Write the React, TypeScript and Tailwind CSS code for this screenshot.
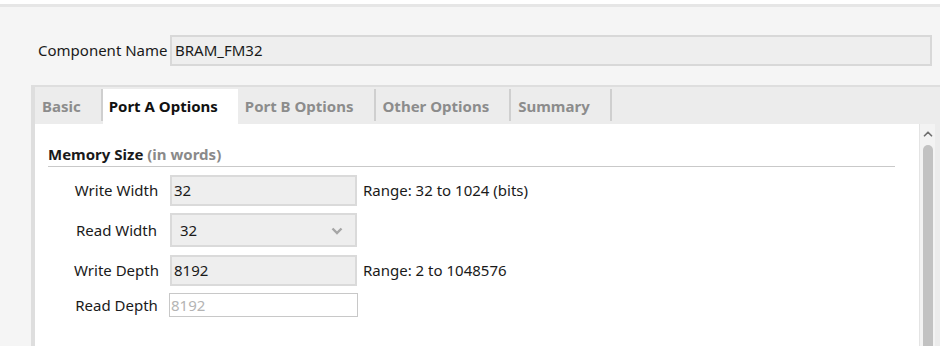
import { ChevronUp } from "lucide-react";

const tabs = ["Basic", "Port A Options", "Port B Options", "Other Options", "Summary"];

function Row({
  label,
  children,
  hint,
}: {
  label: string;
  children: React.ReactNode;
  hint?: string;
}) {
  return (
    <div className="flex items-center">
      <div className="w-[107px] shrink-0 text-center">{label}</div>
      <div className="w-[187px] shrink-0">{children}</div>
      {hint ? <div className="pl-[6px]">{hint}</div> : null}
    </div>
  );
}

export default function App() {
  return (
    <div
      className="h-[346px] w-[940px] overflow-hidden bg-white text-[15px] text-[#1a1a1a]"
      style={{ fontFamily: '"Noto Sans", "Open Sans", sans-serif' }}
    >
      <div className="mt-[4px] h-[3px] bg-[#e6e6e6]" />
      <div className="h-[339px] bg-[#f5f5f5] pt-[28px]">
        {/* component name */}
        <div className="flex items-center pl-[38px] pr-[8px]">
          <span className="w-[132px] shrink-0">Component Name</span>
          <div className="flex h-[31px] flex-1 items-center border-2 border-[#d8d8d8] bg-[#eeeeee] pl-[3px]">
            BRAM_FM32
          </div>
        </div>

        {/* tab panel */}
        <div className="ml-[31px] mt-[19px] flex h-[270px] flex-col border-l-[4px] border-t-[2px] border-[#dedede] bg-[#ececec]">
          <div className="flex h-[37px] items-end">
            {tabs.map((t, i) => {
              const active = i === 1;
              return (
                <div key={t} className="flex h-[35px] items-stretch">
                  <div
                    className={
                      active
                        ? "flex items-center bg-white pl-[6px] pr-[20px] font-bold text-[#111]"
                        : "flex items-center pl-[7px] pr-[20px] font-bold text-[#8c8c8c]"
                    }
                  >
                    {t}
                  </div>
                  {!active ? <div className="mb-[3px] w-[2px] bg-[#cfcfcf]" /> : null}
                </div>
              );
            })}
          </div>
          <div className="flex flex-1">
            <div className="flex-1 bg-white pl-[13px] pr-[24px] pt-[21px]">
              <div className="border-b border-[#c9c9c9] pb-[2px] font-bold leading-[19px]">
                Memory Size <span className="text-[#8a8a8a]">(in words)</span>
              </div>
              <div className="mt-[8px] flex flex-col pl-[15px]">
                <Row label="Write Width" hint="Range: 32 to 1024 (bits)">
                  <div className="flex h-[31px] items-center border-2 border-[#dadada] bg-[#eeeeee] pl-[2px]">
                    32
                  </div>
                </Row>
                <div className="mt-[7px]">
                  <Row label="Read Width">
                    <div className="flex h-[34px] items-center justify-between border-2 border-[#dadada] bg-[#eeeeee] pl-[8px] pr-[12px]">
                      <span>32</span>
                      <svg width="12" height="8" viewBox="0 0 12 8" className="mt-[1px]">
                        <polyline
                          points="1.5,1.5 6,6 10.5,1.5"
                          fill="none"
                          stroke="#a6a6a6"
                          strokeWidth="2.4"
                        />
                      </svg>
                    </div>
                  </Row>
                </div>
                <div className="mt-[8px]">
                  <Row label="Write Depth" hint="Range: 2 to 1048576">
                    <div className="flex h-[31px] items-center border-2 border-[#dadada] bg-[#eeeeee] pl-[2px]">
                      8192
                    </div>
                  </Row>
                </div>
                <div className="mt-[7px]">
                  <Row label="Read Depth">
                    <div className="-ml-[1px] flex h-[24px] w-[189px] items-center border border-[#c8c8c8] bg-white pl-[1px] text-[#b4b4b4]">
                      8192
                    </div>
                  </Row>
                </div>
              </div>
            </div>
            <div className="flex w-[16px] flex-col items-center border-l border-[#e4e4e4] bg-[#f3f3f3]">
              <ChevronUp className="mt-[3px] h-[14px] w-[14px] text-[#707070]" strokeWidth={3} />
              <div className="mt-[4px] w-[10px] flex-1 rounded-t-full bg-[#c2c2c2]" />
            </div>
            <div className="w-[5px] bg-[#ececec]" />
          </div>
        </div>
      </div>
    </div>
  );
}
